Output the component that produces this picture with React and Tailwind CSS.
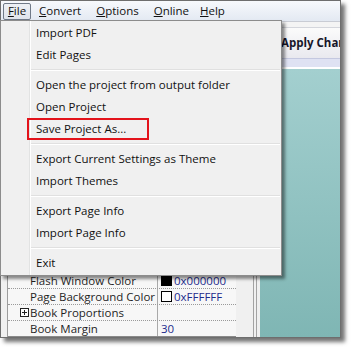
const items = [
  { t: "Import PDF" },
  { t: "Edit Pages" },
  { sep: true },
  { t: "Open the project from output folder" },
  { t: "Open Project" },
  { t: "Save Project As...", mark: true },
  { sep: true },
  { t: "Export Current Settings as Theme" },
  { t: "Import Themes" },
  { sep: true },
  { t: "Export Page Info" },
  { t: "Import Page Info" },
  { sep: true },
  { t: "Exit" },
];

const menus = [
  { first: "C", rest: "onvert", ml: "ml-[8px]" },
  { first: "O", rest: "ptions", ml: "ml-[15px]" },
  { first: "O", rest: "nline", ml: "ml-[15px]" },
  { first: "H", rest: "elp", ml: "ml-[11px]" },
];

function PlusBox() {
  return (
    <svg width="9" height="9" viewBox="0 0 9 9" className="block">
      <rect x="0.5" y="0.5" width="8" height="8" fill="#fff" stroke="#222" />
      <path d="M2 4.5h5M4.5 2v5" stroke="#222" />
    </svg>
  );
}

function GridRow({ name, plus, swatch, value }) {
  return (
    <div className="flex h-[16px] border-b border-dotted border-[#9a9a9a]">
      <div className="w-[150px] flex items-center border-r border-[#a9a9a9]">
        <div className="w-[22px] flex justify-end pr-[1px]">{plus && <PlusBox />}</div>
        <span className="text-[#1f1f1f]">{name}</span>
      </div>
      <div className="flex-1 flex items-center pl-[3px] text-[#1c2a8c]">
        {swatch && (
          <span
            className={
              swatch === "black"
                ? "w-[11px] h-[11px] bg-black mr-[2px]"
                : "w-[11px] h-[11px] bg-white border border-black mr-[2px]"
            }
          />
        )}
        {value}
      </div>
    </div>
  );
}

export default function App() {
  return (
    <div
      className="w-[353px] h-[347px] bg-white relative text-[11.5px] leading-none"
      style={{ fontFamily: "'Open Sans', 'Noto Sans', sans-serif" }}
    >
      <div className="relative w-[341px] h-[338px] border border-[#6e6e6e] bg-[#f0f0f0] shadow-[4px_4px_4px_rgba(0,0,0,0.55)]">
        {/* menu bar */}
        <div className="h-[20px] flex items-center bg-gradient-to-b from-[#f7f9fc] to-[#e3e9f2] text-[#111]">
          <div className="ml-[2px] w-[28px] h-[17px] flex items-center justify-center rounded-[2px] border border-[#707a88] bg-gradient-to-b from-[#eef1f5] to-[#dfe4eb]">
            <span><span className="underline">F</span>ile</span>
          </div>
          {menus.map((m, i) => (
            <span key={i} className={m.ml}>
              <span className="underline">{m.first}</span>
              {m.rest}
            </span>
          ))}
        </div>

        {/* body */}
        <div className="flex h-[316px]">
          <div className="w-[251px] flex flex-col justify-end pl-[6px]">
            <div className="w-[229px] border-l border-[#9c9c9c] bg-[#f7f7f7]">
              <GridRow name="Flash Window Color" swatch="black" value="0x000000" />
              <GridRow name="Page Background Color" swatch="white" value="0xFFFFFF" />
              <GridRow name="Book Proportions" plus />
              <div className="flex h-[16px] border-b border-[#8a8a8a]">
                <div className="w-[150px] flex items-center border-r border-[#a9a9a9]">
                  <div className="w-[22px]" />
                  <span className="text-[#1f1f1f]">Book Margin</span>
                </div>
                <div className="flex-1 flex items-center pl-[3px] text-[#1c2a8c]">30</div>
              </div>
            </div>
          </div>
          <div className="w-[8px] flex">
            <div className="ml-[1px] w-[4px] h-full border-l border-r border-[#a3a3a3]" />
          </div>
          <div className="flex-1 min-w-0 flex flex-col">
            <div className="h-[48px] flex flex-col">
              <div className="h-[1px] bg-[#c9ccd4]" />
              <div className="h-[5px] bg-[#f4f4f4]" />
              <div className="h-[1px] bg-[#d4d6dc]" />
              <div className="h-[30px] flex items-center pl-[21px] bg-gradient-to-b from-[#fbfbfb] to-[#e9e9ef] overflow-hidden">
                <span className="font-bold text-[#16162a] whitespace-nowrap">Apply Changes</span>
              </div>
              <div className="h-[1px] bg-[#c4c8e0]" />
              <div className="h-[8px] bg-[#dfe2f3]" />
              <div className="h-[2px] bg-white" />
            </div>
            <div className="flex-1 bg-gradient-to-b from-[#a3cfcf] to-[#7fb6b4]" />
          </div>
        </div>

        {/* dropdown */}
        <div className="absolute left-[-1px] top-[19px] w-[282px] h-[256px] border border-[#8c8c8c] bg-[#f0f0f0] pt-[1px] pb-[1px] shadow-[3px_3px_3px_rgba(0,0,0,0.45)] text-[#111]">
          <div className="absolute left-[28px] top-0 bottom-0 w-[1px] bg-[#e2e3e3]" />
          <div className="absolute left-[29px] top-0 bottom-0 w-[1px] bg-white" />
          {items.map((it, i) =>
            it.sep ? (
              <div key={i} className="h-[8px] pl-[30px] pr-[1px] flex flex-col justify-center">
                <div className="h-[1px] bg-[#e0e0e0]" />
                <div className="h-[1px] bg-white" />
              </div>
            ) : (
              <div key={i} className="relative h-[22px] pl-[35px] flex items-center whitespace-nowrap">
                {it.t}
                {it.mark && (
                  <div className="absolute left-[26px] top-0 w-[122px] h-[22px] border-2 border-[#e3131b]" />
                )}
              </div>
            )
          )}
        </div>
      </div>
    </div>
  );
}
